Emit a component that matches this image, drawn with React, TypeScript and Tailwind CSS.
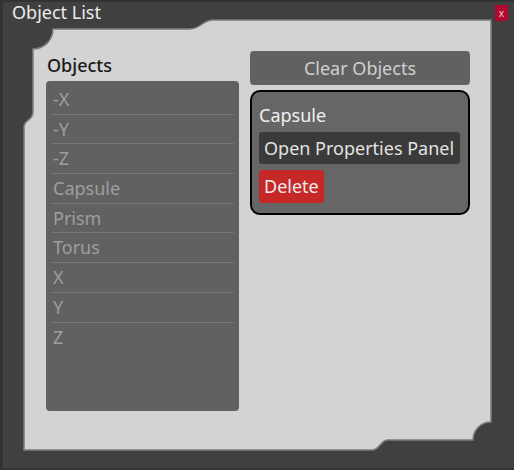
import React from "react";

const items = ["-X", "-Y", "-Z", "Capsule", "Prism", "Torus", "X", "Y", "Z"];

function FrameShape() {
  const d =
    "M53 29 L190 29 C200 29 203 20 213 20 L491 20 L491 422 A18 18 0 0 0 473 440 L388 440 C380 440 380 450 372 450 L24 450 L24 127 C24 119 33 121 33 112 L33 49 A20 20 0 0 0 53 29 Z";
  return (
    <svg
      className="absolute inset-0 pointer-events-none"
      width="514"
      height="470"
      viewBox="0 0 514 470"
    >
      <path d={d} fill="#d3d3d3" stroke="#7c7c7c" strokeWidth="1.5" />
    </svg>
  );
}

export default function App() {
  return (
    <div
      className="relative w-[514px] h-[470px] bg-[#404040] border-l-[3px] border-t-[2px] border-b-[2px] border-[#333333] overflow-hidden"
      style={{ fontFamily: '"Noto Sans", "Open Sans", sans-serif' }}
    >
      <div className="absolute -left-[3px] -top-[2px]">
        <FrameShape />
      </div>
      <div className="relative flex flex-col">
        <div className="flex justify-between h-[23px]">
          <div className="pl-[9px] -mt-[2px] text-[18px] leading-[24px] text-[#ececec]">
            Object List
          </div>
          <div className="mt-[3px] mr-[6px] w-[13px] h-[16px] bg-[#b0092d] flex items-center justify-center text-[10px] leading-none text-[#f2d0d6]">
            x
          </div>
        </div>
        <div className="flex pl-[43px] pt-[26px] gap-[11px]">
          <div className="flex flex-col w-[193px]">
            <div className="mt-[3px] mb-[5px] pl-[1px] text-[18px] leading-[22px] font-medium text-[#1a1a1a]">
              Objects
            </div>
            <div className="h-[330px] bg-[#616161] rounded-[4px] pt-[4px] px-[5px]">
              {items.map((it, i) => (
                <div
                  key={it}
                  className={
                    "h-[29.7px] flex items-center pl-[2px] text-[18px] text-[#9e9e9e] " +
                    (i < items.length - 1 ? "border-b border-[#777777]" : "")
                  }
                >
                  {it}
                </div>
              ))}
            </div>
          </div>
          <div className="flex flex-col w-[220px] gap-[5px]">
            <div className="h-[34px] bg-[#616161] rounded-[4px] flex items-center justify-center text-[18px] text-[#d0d0d0]">
              Clear Objects
            </div>
            <div className="h-[125px] border-2 border-black rounded-[10px] bg-[#666666] pl-[7px] pr-[8px] pt-[12px] flex flex-col items-start">
              <div className="text-[18px] leading-[22px] text-[#f0f0f0]">
                Capsule
              </div>
              <div className="mt-[6px] w-full h-[32px] bg-[#3a3a3a] rounded-[3px] px-[5px] flex items-center text-[18px] text-[#e2e2e2] whitespace-nowrap">
                Open Properties Panel
              </div>
              <div className="mt-[6px] h-[33px] bg-[#c62828] rounded-[3px] px-[5px] flex items-center text-[18px] text-[#ececec]">
                Delete
              </div>
            </div>
          </div>
        </div>
      </div>
    </div>
  );
}
